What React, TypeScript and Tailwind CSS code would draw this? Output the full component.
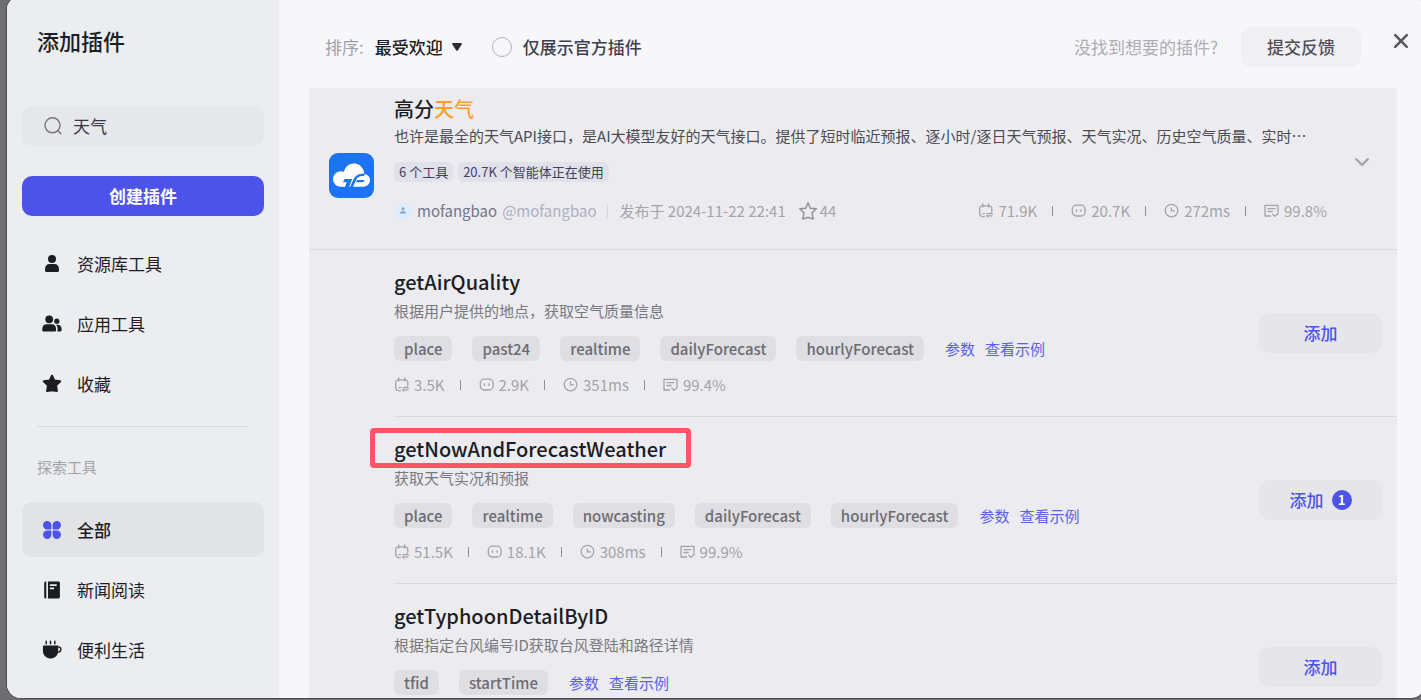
import React from 'react';

type Stat = { calls: string; bots: string; latency: string; success: string };

type Tool = {
  name: string;
  description: string;
  params: string[];
  stats?: Stat;
  added?: number;
  highlighted?: boolean;
};

const tools: Tool[] = [
  {
    name: 'getAirQuality',
    description: '根据用户提供的地点，获取空气质量信息',
    params: ['place', 'past24', 'realtime', 'dailyForecast', 'hourlyForecast'],
    stats: { calls: '3.5K', bots: '2.9K', latency: '351ms', success: '99.4%' },
  },
  {
    name: 'getNowAndForecastWeather',
    description: '获取天气实况和预报',
    params: ['place', 'realtime', 'nowcasting', 'dailyForecast', 'hourlyForecast'],
    stats: { calls: '51.5K', bots: '18.1K', latency: '308ms', success: '99.9%' },
    added: 1,
    highlighted: true,
  },
  {
    name: 'getTyphoonDetailByID',
    description: '根据指定台风编号ID获取台风登陆和路径详情',
    params: ['tfid', 'startTime'],
  },
];

function SearchIcon() {
  return (
    <svg className="shrink-0" width="20" height="20" viewBox="0 0 20 20" fill="none" stroke="#77787f" strokeWidth="1.5" strokeLinecap="round" aria-hidden="true">
      <circle cx="9.5" cy="9.3" r="7.5" />
      <path d="M15.2 15l2.6 2.6" />
    </svg>
  );
}

function PersonIcon() {
  return (
    <svg width="20" height="20" viewBox="0 0 20 20" fill="currentColor" aria-hidden="true">
      <circle cx="10" cy="5" r="4" />
      <path d="M3 15.2c0-3.2 1.8-5.2 4.6-5.2h4.8c2.8 0 4.6 2 4.6 5.2v1.3c0 .9-.7 1.5-1.5 1.5h-11c-.8 0-1.5-.6-1.5-1.5z" />
    </svg>
  );
}

function PeopleIcon() {
  return (
    <svg width="20" height="20" viewBox="0 0 20 20" fill="currentColor" aria-hidden="true">
      <circle cx="7.2" cy="5.3" r="3.9" />
      <path d="M.3 14.8c0-2.800 1.700-4.600 4.200-4.600h5.400c2.500 0 4.200 1.800 4.200 4.600v1.400c0 .7-.6 1.300-1.300 1.300H1.600c-.7 0-1.300-.6-1.300-1.300z" />
      <circle cx="14.800" cy="7.200" r="2.600" />
      <path d="M14 10.800h1.700c2.300 0 3.900 1.700 3.900 4.300v1.200c0 .6-.5 1.200-1.200 1.200h-3.200c.3-.4.4-.9.4-1.400v-1.400c0-1.500-.6-2.900-1.600-3.900z" />
    </svg>
  );
}

function StarIcon() {
  return (
    <svg width="20" height="20" viewBox="0 0 20 20" fill="currentColor" stroke="currentColor" strokeWidth="2" strokeLinejoin="round" aria-hidden="true">
      <path d="M10 1.700l2.300 4.700 5.900.8-4.100 4.100.8 5.800L10 16.300l-4.900.8.800-5.800-4.100-4.100 5.900-.8z" />
    </svg>
  );
}

function AllIcon() {
  return (
    <svg width="20" height="20" viewBox="0 0 20 20" fill="#4d53e8" aria-hidden="true">
      <path d="M5.200 1a4.200 4.200 0 0 1 4.200 4.200v3.200c0 .6-.4 1-1 1H5.200a4.200 4.200 0 0 1 0-8.400z" />
      <path d="M14.800 1a4.200 4.200 0 0 1 0 8.400h-3.200c-.6 0-1-.4-1-1V5.200A4.200 4.200 0 0 1 14.800 1z" />
      <path d="M5.200 19a4.200 4.200 0 0 1 0-8.400h3.200c.6 0 1 .4 1 1v3.200A4.200 4.200 0 0 1 5.200 19z" />
      <path d="M14.800 19a4.200 4.200 0 0 1-4.200-4.200v-3.200c0-.6.4-1 1-1h3.200a4.200 4.200 0 0 1 0 8.400z" />
    </svg>
  );
}

function BookIcon() {
  return (
    <svg width="20" height="20" viewBox="0 0 20 20" fill="currentColor" aria-hidden="true">
      <path d="M2.200 3A1.500 1.500 0 0 1 3.700 1.400h.6v17h-.6a1.500 1.500 0 0 1-1.500-1.500z" />
      <path fillRule="evenodd" d="M6 1.400h10.500c.8 0 1.400.6 1.400 1.400v14.200c0 .8-.6 1.400-1.400 1.400H6zM8.400 4.200c-.4 0-.6.300-.6.600v.6c0 .4.200.6.600.6h5.800c.4 0 .6-.2.600-.6v-.6c0-.3-.2-.6-.6-.6zM8.400 7.600c-.4 0-.6.300-.6.600v.5c0 .4.200.6.600.6h3.200c.4 0 .6-.2.600-.6v-.5c0-.3-.2-.6-.6-.6z" />
    </svg>
  );
}

function CupIcon() {
  return (
    <svg width="20" height="20" viewBox="0 0 20 20" aria-hidden="true">
      <path d="M4.200 1.300v2.400M8.500 1.300v2.400M12.800 1.300v2.400" stroke="currentColor" strokeWidth="1.500" strokeLinecap="round" />
      <path d="M1.800 5.600h13.400c.6 0 1 .4 1 1v3.900c0 4.500-3 7.900-7 7.900H8.200C4 18.400.9 15 .9 10.500V6.600c0-.6.4-1 .9-1z" fill="currentColor" />
      <path d="M15.600 6.900h1.200a2 2 0 0 1 2 2v.7a2.500 2.500 0 0 1-2.500 2.500h-.8" fill="none" stroke="currentColor" strokeWidth="1.400" />
    </svg>
  );
}

function CallsIcon() {
  return (
    <svg width="16" height="16" viewBox="0 0 16 16" fill="none" stroke="currentColor" strokeWidth="1.300" strokeLinecap="round" aria-hidden="true">
      <path d="M4.800.8v3.200M10.700.8v3.200" />
      <path d="M13.800 8.300V5.800c0-1.900-1-3-2.900-3H4.600C2.700 2.800 1.700 3.900 1.700 5.800v4.300c0 2.400 1.200 3.700 3.600 3.700h1.100" />
      <path d="M5 10.700h1.400M8.800 10.700h5.200l-1-1M14 12.900H8.800l1.200 1.200" />
    </svg>
  );
}

function BotIcon() {
  return (
    <svg width="16" height="16" viewBox="0 0 16 16" fill="none" stroke="currentColor" strokeWidth="1.300" strokeLinecap="round" aria-hidden="true">
      <rect x="1.300" y="2.200" width="12.800" height="10.800" rx="4" />
      <path d="M5.400 7v1.200M10 7v1.200" strokeWidth="1.400" />
    </svg>
  );
}

function ClockIcon() {
  return (
    <svg width="16" height="16" viewBox="0 0 16 16" fill="none" stroke="currentColor" strokeWidth="1.300" strokeLinecap="round" aria-hidden="true">
      <circle cx="7.500" cy="7.600" r="6.300" />
      <path d="M7.400 4.800v3.100h3" />
    </svg>
  );
}

function SuccessIcon() {
  return (
    <svg width="16" height="16" viewBox="0 0 16 16" fill="none" stroke="currentColor" strokeWidth="1.300" strokeLinecap="round" strokeLinejoin="round" aria-hidden="true">
      <path d="M6.500 13H1V2.300h13v6.700" />
      <path d="M4 5.600h7M4 8.500h4.200M8.800 11.300l2.200 2.100 3.300-3.200" />
    </svg>
  );
}

function Logo() {
  return (
    <svg className="h-[45px] w-[45px] shrink-0" viewBox="0 0 45 45" role="img" aria-label="高分天气">
      <rect width="45" height="45" rx="9" fill="#1d74f2" />
      <path d="M12 33.700a7.700 7.700 0 0 1-.6-15.500c1.300-.1 2.600.1 3.600.6C16 13.800 20 10.500 24.800 10.500c4.600 0 8 2.500 9.700 6.700l.8 3.700c3.400.3 5.700 2.900 5.700 6.200 0 3.800-2.800 6.600-6.700 6.600z" fill="#fff" />
      <path d="M15.500 26h7.800l-3.300 7.900h-2.200l-1.800-.2 1.700-4.400h-3.700z" fill="#1d74f2" />
      <path d="M20.800 34.500l3.600-8c1.500-3.400 4.300-5.300 8.200-5.700l3.400-.2-.9 2.400h-2c-3 .2-4.800 1.500-6 4l-3.500 7.500z" fill="#1d74f2" />
      <path d="M27.200 29.200l.9-2.200h7.600c-.5 1.500-1.500 2.200-3.100 2.200z" fill="#1d74f2" />
    </svg>
  );
}

function Divider() {
  return <span className="mr-[18px] ml-[15px] h-[10px] w-px bg-[#8f9096]" />;
}

function Stats({ stats }: { stats: Stat }) {
  return (
    <div className="flex h-5 items-center text-[15px] leading-5 whitespace-nowrap text-[#a3a3a9]">
      <span className="flex items-center gap-1"><CallsIcon />{stats.calls}</span>
      <Divider />
      <span className="flex items-center gap-1"><BotIcon />{stats.bots}</span>
      <Divider />
      <span className="flex items-center gap-1"><ClockIcon />{stats.latency}</span>
      <Divider />
      <span className="flex items-center gap-1"><SuccessIcon />{stats.success}</span>
    </div>
  );
}

function NavItem({ icon, label, active }: { icon: React.ReactNode; label: string; active?: boolean }) {
  return (
    <a
      href="#"
      className={
        active
          ? 'flex h-[55px] items-center gap-[15px] rounded-[10px] bg-[#e2e3e6] pl-5 text-[17px] font-medium text-[#1c1c23]'
          : 'flex h-[55px] items-center gap-[15px] rounded-[10px] pl-5 text-[17px] text-[#1c1c23]'
      }
    >
      {icon}
      {label}
    </a>
  );
}

function Sidebar() {
  return (
    <aside className="flex w-[272px] shrink-0 flex-col bg-[#ebedf1] px-[15px] pt-[29px]">
      <h1 className="px-[15px] text-[22px] leading-[30px] font-medium text-[#1c1f23]">添加插件</h1>
      <div className="mt-[51px] flex h-10 items-center gap-2.5 rounded-[10px] bg-[#e6e7eb] px-[21px]">
        <SearchIcon />
        <input aria-label="搜索插件" defaultValue="天气" className="w-full min-w-0 bg-transparent text-[17px] text-[#383743] outline-none" />
      </div>
      <button type="button" className="mt-[30px] h-10 rounded-[10px] bg-[#4d53e8] text-[17px] font-bold text-white">创建插件</button>
      <nav className="mt-5 flex flex-col">
        <div className="flex flex-col gap-[5px]">
          <NavItem icon={<PersonIcon />} label="资源库工具" />
          <NavItem icon={<PeopleIcon />} label="应用工具" />
          <NavItem icon={<StarIcon />} label="收藏" />
        </div>
        <hr className="mx-[15px] mt-[15px] border-[#d9dadf]" />
        <h2 className="mt-[30px] px-[15px] text-[15px] leading-5 text-[#a3a4a9]">探索工具</h2>
        <div className="mt-[25px] flex flex-col gap-[5px]">
          <NavItem icon={<AllIcon />} label="全部" active />
          <NavItem icon={<BookIcon />} label="新闻阅读" />
          <NavItem icon={<CupIcon />} label="便利生活" />
        </div>
      </nav>
    </aside>
  );
}

function Toolbar() {
  return (
    <header className="flex shrink-0 items-start pt-[31px] pr-2.5 pb-[21px] pl-[46px] text-[17px]">
      <div className="flex h-10 items-center">
        <label htmlFor="sort" className="text-[#a0a1a8]">排序:</label>
        <div className="ml-[11px] flex items-center gap-[9px]">
          <select id="sort" className="appearance-none bg-transparent font-medium text-[#1c1c23] outline-none">
            <option>最受欢迎</option>
          </select>
          <svg width="10" height="8" viewBox="0 0 10 8" fill="#2b2b35" aria-hidden="true">
            <path d="M.8 0h8.400c.7 0 1 .7.600 1.200L5.700 7.400c-.4.600-1 .600-1.400 0L.2 1.200C-.2.700.1 0 .8 0z" />
          </svg>
        </div>
        <input id="official" type="checkbox" className="ml-[30px] h-5 w-5 appearance-none rounded-full border border-[#b0b1c2]" />
        <label htmlFor="official" className="ml-[11px] font-medium text-[#3c3f51]">仅展示官方插件</label>
      </div>
      <div className="ml-auto flex h-10 items-center gap-[23px]">
        <span className="text-[#adadb3]">没找到想要的插件?</span>
        <button type="button" className="h-10 w-[120px] rounded-[10px] bg-[#f0f0f2] font-medium text-[#4f4e5a]">提交反馈</button>
      </div>
      <button type="button" aria-label="关闭" className="mt-1 ml-[30px] flex h-5 w-5 items-center justify-center text-[#57565f]">
        <svg width="16" height="16" viewBox="0 0 16 16" fill="none" stroke="currentColor" strokeWidth="2.500" strokeLinecap="round" aria-hidden="true">
          <path d="M2.200 2.200l11.600 11.600M13.800 2.200L2.200 13.800" />
        </svg>
      </button>
    </header>
  );
}

function PluginHeader() {
  return (
    <section className="flex items-center border-b border-[#dadbdf] pt-[7px] pb-[28px] pl-5">
      <div className="mt-[34px]"><Logo /></div>
      <div className="ml-5 min-w-0 flex-1">
        <h2 className="text-[20px] leading-7 font-medium text-[#1c1c23]">
          高分<span className="text-[#ff9f2e]">天气</span>
        </h2>
        <p className="mt-[3px] truncate text-[15px] leading-5 text-[#4b4b52]">
          也许是最全的天气API接口，是AI大模型友好的天气接口。提供了短时临近预报、逐小时/逐日天气预报、天气实况、历史空气质量、实时…
        </p>
        <div className="mt-4 flex gap-[5px] text-[13px] leading-5 text-[#3f4257]">
          <span className="rounded-[5px] bg-[#e1e1eb] px-[5px]">6 个工具</span>
          <span className="rounded-[5px] bg-[#e1e1eb] px-[5px]">20.7K 个智能体正在使用</span>
        </div>
        <div className="mt-[19px] flex h-5 items-center text-[15px] leading-5 whitespace-nowrap">
          <svg width="18" height="18" viewBox="0 0 18 18" aria-hidden="true">
            <circle cx="9" cy="9" r="9" fill="#dcedfd" />
            <circle cx="9" cy="6.800" r="1.500" fill="#86a4cb" />
            <path d="M6 11.600c0-1.500.9-2.300 2.200-2.300h1.600c1.300 0 2.200.8 2.200 2.300z" fill="#86a4cb" />
          </svg>
          <span className="ml-[5px] text-[#72748a]">mofangbao</span>
          <span className="ml-[5px] text-[#aeafc1]">@mofangbao</span>
          <span className="mr-3 ml-2.5 h-[13px] w-px bg-[#d5d6de]" />
          <span className="text-[#a3a3a9]">发布于 2024-11-22 22:41</span>
          <svg className="ml-3" width="20" height="20" viewBox="0 0 20 20" fill="none" stroke="#929298" strokeWidth="1.500" strokeLinejoin="round" aria-hidden="true">
            <path d="M10 1.800l2.300 5.400 6 .6-4.300 4.100 1.200 6.200L10 16.200l-5.200 1.900L6 11.900 1.700 7.800l6-.6z" />
          </svg>
          <span className="ml-0.5 text-[#a3a3a9]">44</span>
          <div className="ml-auto">
            <Stats stats={{ calls: '71.9K', bots: '20.7K', latency: '272ms', success: '99.8%' }} />
          </div>
        </div>
      </div>
      <button type="button" aria-label="收起" className="mt-2 mr-[25px] ml-[25px] flex h-5 w-5 items-center justify-center text-[#a5a5aa]">
        <svg width="16" height="16" viewBox="0 0 16 16" fill="none" stroke="currentColor" strokeWidth="2.400" strokeLinecap="round" strokeLinejoin="round" aria-hidden="true">
          <path d="M2.200 5.200L8 11l5.800-5.800" />
        </svg>
      </button>
    </section>
  );
}

function ToolRow({ tool }: { tool: Tool }) {
  return (
    <article className="ml-[85px] flex items-start justify-between border-b border-[#d9d9de] pt-[18px] pr-[15px] pb-[21px]">
      <div className="min-w-0">
        <div className="flex">
          <h3 className="relative text-[20px] leading-7 font-medium text-[#1c1c23]">
            {tool.name}
            {tool.highlighted && (
              <span className="absolute -top-[7px] -right-[25px] -bottom-[5px] -left-6 rounded-[4px] border-5 border-[#ff5566]" />
            )}
          </h3>
        </div>
        <p className="mt-[5px] text-[15px] leading-5 text-[#78787f]">{tool.description}</p>
        <div className="mt-[15px] flex items-center gap-5 text-[15px] leading-[25px] whitespace-nowrap">
          {tool.params.map((param) => (
            <span key={param} className="rounded-[6px] bg-[#dfdfe3] px-2.5 font-medium text-[#6c6c72]">{param}</span>
          ))}
          <span className="ml-px flex gap-2.5 text-[#5a60ea]">
            <a href="#">参数</a>
            <a href="#">查看示例</a>
          </span>
        </div>
        {tool.stats && (
          <div className="mt-[14px]">
            <Stats stats={tool.stats} />
          </div>
        )}
      </div>
      <button type="button" className="mt-[45px] flex h-10 w-[123px] shrink-0 items-center justify-center gap-2 rounded-[10px] bg-[#e6e6ea] text-[17px] font-medium text-[#4d53e8]">
        添加
        {tool.added && (
          <span className="flex h-5 w-5 items-center justify-center rounded-full bg-[#4d53e8] text-[13px] leading-5 font-bold text-white">{tool.added}</span>
        )}
      </button>
    </article>
  );
}

export default function App() {
  return (
    <div lang="zh-CN" className="flex h-screen overflow-hidden bg-[#6e6e71] pb-0.5 pl-[7px] font-['Noto_Sans_CJK_SC',sans-serif]">
      <div role="dialog" aria-label="添加插件" className="-mt-1 -mr-1 flex min-w-0 flex-1 overflow-hidden rounded-[14px] bg-[#f7f7fa] ring-1 ring-[#4c4c50]">
        <Sidebar />
        <main className="flex min-w-0 flex-1 flex-col pr-1">
          <Toolbar />
          <div className="mr-6 ml-[30px] min-h-0 flex-1 overflow-hidden bg-[#ececf0]">
            <PluginHeader />
            {tools.map((tool) => (
              <ToolRow key={tool.name} tool={tool} />
            ))}
          </div>
        </main>
      </div>
    </div>
  );
}
